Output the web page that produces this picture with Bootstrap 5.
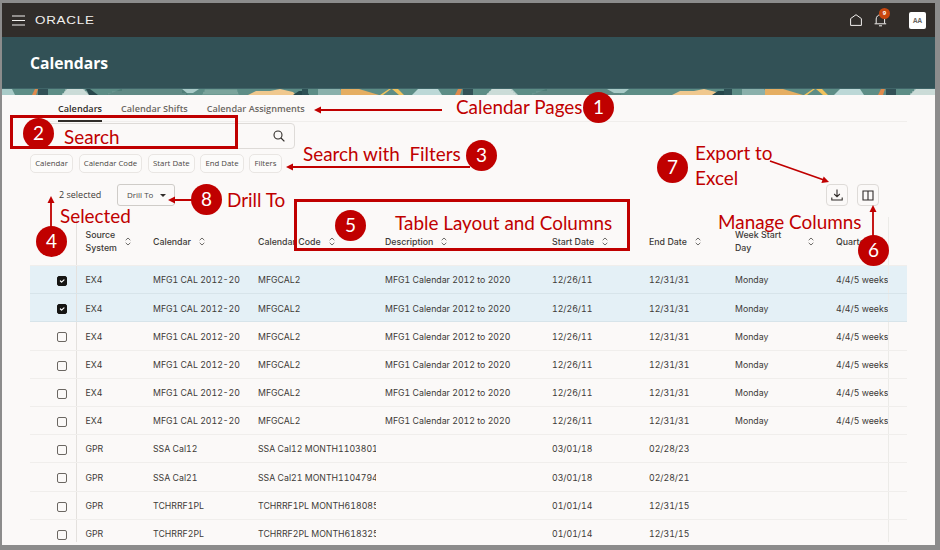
<!DOCTYPE html>
<html lang="en">
<head>
<meta charset="utf-8">
<title>Calendars</title>
<link rel="stylesheet" href="https://cdn.jsdelivr.net/npm/bootstrap@5.3.0/dist/css/bootstrap.min.css">
<style>
html,body{margin:0;height:100%;background:#fff;overflow:hidden}
body{font-family:"Open Sans","Noto Sans",sans-serif;color:#3d3a37}
.stage{position:relative;width:940px;height:550px;overflow:hidden}
.frame{width:940px;height:550px;border-style:solid;border-color:#8c8c8c;border-width:3px 5px 5px 2px;background:#fbf9f8;display:flex;flex-direction:column}
.topbar{height:34px;background:#312d2a;padding-left:10px;padding-right:9px;flex:none}
.oracle{font-family:"Liberation Sans",sans-serif;font-size:11px;line-height:1;color:#f2f0ee;letter-spacing:.6px;transform:scaleX(1.22);transform-origin:left center;margin-left:10px;width:48px}
.bellwrap{position:relative;width:13px;height:14px;margin-left:12px;margin-right:22px}
.bellwrap svg{display:block}
.bellbadge{position:absolute;left:5px;top:-5px;width:11px;height:11px;border-radius:50%;background:#c8470f;color:#fff;font-size:6px;line-height:11px;text-align:center;font-weight:700}
.avatar{width:17px;height:17px;background:#fff;border-radius:2px;color:#6a6662;font-size:6.5px;font-weight:700;line-height:17px;text-align:center}
.titlebar{height:51px;background:#325156;flex:none;padding-left:28px;color:#fff}
.titlebar h1{font-size:15.7px;font-weight:700;margin:0;padding-top:16px;line-height:20px}
.banner{display:block;height:7px;width:100%;flex:none}
.body-area{flex:1;min-height:0;padding:0 28px 0 28px;display:flex;flex-direction:column}
.tabrow{height:27px;border-bottom:1px solid #f0eeec;gap:19px;flex:none;padding-left:28px}
.tabitem{font-size:9.15px;font-weight:600;color:#6b6762;line-height:27px;height:27px;text-decoration:none;padding:0}
.tabitem.on{color:#312d2a;border-bottom:2px solid #312d2a}
.searchrow{margin-top:1px;width:265px;height:26px;border:1px solid #dedbd8;border-radius:4px;background:#fbf9f8;flex:none;padding-right:9px}
.chiprow{gap:5.5px;margin-top:5px;flex:none}
.chipitem{height:18.5px;font-size:7.8px;line-height:17px;padding:0 4.2px;color:#4a4744;background:#fcfbfa;border:1px solid #e9e6e3;border-radius:5px}
.toolrow{height:23px;margin-top:11px;flex:none;padding-left:29px;padding-right:28px}
.selcount{font-size:9px;font-weight:500;color:#3d3a37;width:58px;white-space:nowrap}
.drillbtn{width:58px;height:22px;font-size:8px;font-weight:500;color:#4a4744;border:1px solid #cfccc8;border-radius:3px;background:#fbf9f8;padding:0 0 0 9px;display:flex;align-items:center;gap:7px}
.drillbtn i{display:block;width:0;height:0;border-left:3px solid transparent;border-right:3px solid transparent;border-top:3px solid #312d2a}
.iconbtn{width:22px;height:22px;padding:0;border:1px solid #dedbd8;border-radius:4px;background:#fbf9f8;display:flex;align-items:center;justify-content:center}
.iconbtn+.iconbtn{margin-left:9px}
.tablewrap{width:877px;height:325px;overflow:hidden;margin-top:10px;flex:none}
.grid{table-layout:fixed;width:877px;margin:0;--bs-table-bg:transparent;--bs-table-color:#3d3a37;border-collapse:collapse;font-family:Inter,"Open Sans",sans-serif;font-size:8.75px;font-feature-settings:"tnum"}
.grid th,.grid td{padding:0 0 0 9px;white-space:nowrap;overflow:hidden;vertical-align:middle;border-bottom:1px solid #f0eeec;font-weight:400;line-height:12.5px}
.grid tbody td{padding-top:2px}
.grid thead th{height:49px;padding-top:2px;font-size:8.8px;font-weight:500;color:#3d3a37}
.grid tbody tr{height:28.2px}
.grid tr.sel td{background:#e4f0f6;border-bottom-color:#d7e4ea}
.grid .c0,.grid tbody td.c0{padding:0 9px 0 0;text-align:right;border-right:1px solid #e4e1de}
.grid .cq{border-right:1px solid #ecebe8}
.grid .cx,.grid tbody td.cx{padding:0}
.hcell{display:flex;align-items:center;gap:8px}
.hcell.wide{width:79px;justify-content:space-between}
.grid .form-check-input{width:10px;height:10px;margin:3px 0 0;border:1px solid #6b6762;border-radius:2px;background-color:#fbf9f8;box-shadow:none}
.grid .form-check-input:checked{background-color:#161513;border-color:#161513}
.layer{position:absolute;inset:0;pointer-events:none}
.arrows{position:absolute;left:0;top:0}
.num{position:absolute;width:31px;height:31px;background:#c00000;color:#fff;font-family:Lato,sans-serif;font-size:19px}
.note{position:absolute;color:#c00000;font-family:Lato,sans-serif;font-size:18.9px;line-height:24px;white-space:nowrap}
.redbox{position:absolute;border:3px solid #c00000}
.n1{left:583px;top:92px}.n2{left:23px;top:118px}.n3{left:466px;top:140px}.n4{left:36px;top:226px}
.n5{left:335px;top:210px}.n6{left:858px;top:235px}.n7{left:657px;top:152px}.n8{left:191px;top:184px}
.t1{left:456px;top:95px}.t2{left:64px;top:125px}.t3{left:303px;top:142px}.t4a{left:695px;top:141px}.t4b{left:695px;top:166px}
.t5{left:227px;top:188px}.t6{left:60px;top:204px}.t7{left:395px;top:211px}.t8{left:718px;top:210px}
.b1{left:10px;top:115px;width:228px;height:34px}
.b2{left:294px;top:199px;width:336px;height:52px}
</style>
</head>
<body>
<div class="stage">
  <div class="frame">
    <nav class="topbar d-flex align-items-center">
      <svg width="13" height="11" viewBox="0 0 13 11" aria-hidden="true"><path d="M0 1h13M0 5.5h13M0 10h13" stroke="#f2f0ee" stroke-width="1.2" fill="none"/></svg>
      <span class="oracle">ORACLE</span>
      <div class="ms-auto d-flex align-items-center">
        <svg width="12" height="12" viewBox="0 0 12 12" aria-hidden="true"><path d="M.6 11.4V4.6L6 .7l5.4 3.9v6.8z" stroke="#f2f0ee" stroke-width="1" fill="none"/></svg>
        <div class="bellwrap">
          <svg width="13" height="14" viewBox="0 0 13 14" aria-hidden="true"><path d="M2.2 10.5V6a4.2 4.2 0 0 1 8.4 0v4.5M.6 10.8h11.6M5 12.8h3" stroke="#f2f0ee" stroke-width="1" fill="none"/></svg>
          <span class="bellbadge">9</span>
        </div>
        <span class="avatar">AA</span>
      </div>
    </nav>
    <header class="titlebar"><h1>Calendars</h1></header>
    <svg class="banner" viewBox="0 0 933 7" preserveAspectRatio="none" aria-hidden="true">
      <rect width="933" height="7" fill="#5d8d86"/>
      <rect y="0" width="933" height="1" fill="#3f6468"/>
      <g>
        <path d="M0 1h10l3 6H0z" fill="#a9cbc8"/>
        <path d="M30 7l3-6h3l-2 6z" fill="#e08a4c"/>
        <path d="M36 1h10v6H36z" fill="#325156"/>
        <path d="M60 7l5-6h16l6 6z" fill="#b9cfcb"/>
        <path d="M63 2h20M62 4h24M60 6h28" stroke="#eef2ef" stroke-width=".7"/>
        <path d="M84 1h4l8 6h-9z" fill="#28484c"/>
        <path d="M105 7l14-6h62l5 6z" fill="#4f7d77"/>
        <path d="M110 4h70M106 6h78M120 2h60" stroke="#87aaa5" stroke-width=".6"/>
        <path d="M180 1h17l-6 4h-6z" fill="#a9cbc8"/>
        <path d="M200 7l3-6h32l2 6z" fill="#6d9a92"/>
        <path d="M203 3h32M201 5h35" stroke="#9dbdb7" stroke-width=".6"/>
        <path d="M246 7l8-4 14 0 10-2 13 3 3 3z" fill="#f0c88e"/>
        <path d="M291 7l6-4 8 0 2 4z" fill="#25474b"/>
        <path d="M300 1h6v6h-6z" fill="#2e5155"/>
      </g>
      <g>
        <path d="M316 1h22l4 6h-26z" fill="#8ab0ab"/>
        <path d="M339 1h18l20 6h-38z" fill="#e5ae62"/>
        <path d="M378 7l9-6h2l-8 6zM390 1h6l6 6h-5z" fill="#f0c25d"/>
        <path d="M410 7l6-6h20l4 6z" fill="#bcd8d7"/>
        <path d="M453 7l3-6h4l-2 6z" fill="#e08a4c"/>
        <path d="M461 1h10v6h-10z" fill="#325156"/>
        <path d="M484 7l6-6h20l6 6z" fill="#b9cfcb"/>
        <path d="M489 2h20M487 4h24M485 6h28" stroke="#eef2ef" stroke-width=".7"/>
        <path d="M530 7l14-6h70l5 6z" fill="#4f7d77"/>
        <path d="M534 4h80M530 6h88M545 2h68" stroke="#87aaa5" stroke-width=".6"/>
        <path d="M605 1h22l-5 4h-10z" fill="#a9cbc8"/>
        <path d="M670 7l8-4 14 0 10-2 12 3 3 3z" fill="#f0c88e"/>
        <path d="M710 7l6-4 6 0 2 4z" fill="#25474b"/>
        <path d="M722 1h8v6h-8z" fill="#2e5155"/>
      </g>
      <g>
        <path d="M740 1h22l4 6h-26z" fill="#8ab0ab"/>
        <path d="M763 1h18l20 6h-38z" fill="#e5ae62"/>
        <path d="M802 7l9-6h2l-8 6zM814 1h6l6 6h-5z" fill="#f0c25d"/>
        <path d="M832 7l6-6h20l4 6z" fill="#bcd8d7"/>
        <path d="M876 7l3-6h4l-2 6z" fill="#e08a4c"/>
        <path d="M884 1h10v6h-10z" fill="#325156"/>
        <path d="M908 7l6-6h19v6z" fill="#b9cfcb"/>
        <path d="M912 2h21M910 4h23M908 6h25" stroke="#eef2ef" stroke-width=".7"/>
      </g>
    </svg>
    <main class="body-area">
      <div class="tabrow d-flex align-items-start">
        <a class="tabitem on" href="#">Calendars</a>
        <a class="tabitem" href="#">Calendar Shifts</a>
        <a class="tabitem" href="#">Calendar Assignments</a>
      </div>
      <div class="searchrow d-flex align-items-center justify-content-end">
        <svg width="12" height="12" viewBox="0 0 12 12" aria-hidden="true"><circle cx="5" cy="5" r="4" stroke="#312d2a" stroke-width="1.1" fill="none"/><path d="M8 8l3.4 3.4" stroke="#312d2a" stroke-width="1.2"/></svg>
      </div>
      <div class="chiprow d-flex">
        <span class="chipitem">Calendar</span>
        <span class="chipitem">Calendar Code</span>
        <span class="chipitem">Start Date</span>
        <span class="chipitem">End Date</span>
        <span class="chipitem">Filters</span>
      </div>
      <div class="toolrow d-flex align-items-center">
        <span class="selcount">2 selected</span>
        <button class="drillbtn" type="button">Drill To <i></i></button>
        <button class="iconbtn ms-auto" type="button" aria-label="Export to Excel"><svg width="12" height="12" viewBox="0 0 12 12" aria-hidden="true"><path d="M6 .5v7M3.2 5L6 7.8 8.8 5M.8 8.5v2.5h10.4V8.5" stroke="#312d2a" stroke-width="1.1" fill="none"/></svg></button>
        <button class="iconbtn" type="button" aria-label="Manage Columns"><svg width="12" height="11" viewBox="0 0 12 11" aria-hidden="true"><path d="M1 1h10v9H1zM6 1v9" stroke="#312d2a" stroke-width="1.1" fill="none"/></svg></button>
      </div>
      <div class="tablewrap">
        <table class="table grid">
          <colgroup><col style="width:46px"><col style="width:68px"><col style="width:105px"><col style="width:127px"><col style="width:167px"><col style="width:97px"><col style="width:86px"><col style="width:101px"><col style="width:61px"><col style="width:19px"></colgroup>
          <thead>
            <tr>
              <th class="c0"></th>
              <th><div class="hcell"><span>Source<br>System</span><svg width="6" height="9" viewBox="0 0 6 9"><path d="M.7 3.2L3 1l2.3 2.2M.7 5.8L3 8l2.3-2.2" stroke="#4a4744" stroke-width=".8" fill="none"/></svg></div></th>
              <th><div class="hcell"><span>Calendar</span><svg width="6" height="9" viewBox="0 0 6 9"><path d="M.7 3.2L3 1l2.3 2.2M.7 5.8L3 8l2.3-2.2" stroke="#4a4744" stroke-width=".8" fill="none"/></svg></div></th>
              <th><div class="hcell"><span>Calendar Code</span><svg width="6" height="9" viewBox="0 0 6 9"><path d="M.7 3.2L3 1l2.3 2.2M.7 5.8L3 8l2.3-2.2" stroke="#4a4744" stroke-width=".8" fill="none"/></svg></div></th>
              <th><div class="hcell"><span>Description</span><svg width="6" height="9" viewBox="0 0 6 9"><path d="M.7 3.2L3 1l2.3 2.2M.7 5.8L3 8l2.3-2.2" stroke="#4a4744" stroke-width=".8" fill="none"/></svg></div></th>
              <th><div class="hcell"><span>Start Date</span><svg width="6" height="9" viewBox="0 0 6 9"><path d="M.7 3.2L3 1l2.3 2.2M.7 5.8L3 8l2.3-2.2" stroke="#4a4744" stroke-width=".8" fill="none"/></svg></div></th>
              <th><div class="hcell"><span>End Date</span><svg width="6" height="9" viewBox="0 0 6 9"><path d="M.7 3.2L3 1l2.3 2.2M.7 5.8L3 8l2.3-2.2" stroke="#4a4744" stroke-width=".8" fill="none"/></svg></div></th>
              <th><div class="hcell wide"><span>Week Start<br>Day</span><svg width="6" height="9" viewBox="0 0 6 9"><path d="M.7 3.2L3 1l2.3 2.2M.7 5.8L3 8l2.3-2.2" stroke="#4a4744" stroke-width=".8" fill="none"/></svg></div></th>
              <th class="cq"><span>Quarter</span></th>
              <th class="cx"></th>
            </tr>
          </thead>
          <tbody>
            <tr class="sel"><td class="c0"><input class="form-check-input" type="checkbox" checked aria-label="Select row"></td><td>EX4</td><td>MFG1 CAL 2012-20</td><td>MFGCAL2</td><td>MFG1 Calendar 2012 to 2020</td><td>12/26/11</td><td>12/31/31</td><td>Monday</td><td class="cq">4/4/5 weeks</td><td class="cx"></td></tr>
            <tr class="sel"><td class="c0"><input class="form-check-input" type="checkbox" checked aria-label="Select row"></td><td>EX4</td><td>MFG1 CAL 2012-20</td><td>MFGCAL2</td><td>MFG1 Calendar 2012 to 2020</td><td>12/26/11</td><td>12/31/31</td><td>Monday</td><td class="cq">4/4/5 weeks</td><td class="cx"></td></tr>
            <tr><td class="c0"><input class="form-check-input" type="checkbox" aria-label="Select row"></td><td>EX4</td><td>MFG1 CAL 2012-20</td><td>MFGCAL2</td><td>MFG1 Calendar 2012 to 2020</td><td>12/26/11</td><td>12/31/31</td><td>Monday</td><td class="cq">4/4/5 weeks</td><td class="cx"></td></tr>
            <tr><td class="c0"><input class="form-check-input" type="checkbox" aria-label="Select row"></td><td>EX4</td><td>MFG1 CAL 2012-20</td><td>MFGCAL2</td><td>MFG1 Calendar 2012 to 2020</td><td>12/26/11</td><td>12/31/31</td><td>Monday</td><td class="cq">4/4/5 weeks</td><td class="cx"></td></tr>
            <tr><td class="c0"><input class="form-check-input" type="checkbox" aria-label="Select row"></td><td>EX4</td><td>MFG1 CAL 2012-20</td><td>MFGCAL2</td><td>MFG1 Calendar 2012 to 2020</td><td>12/26/11</td><td>12/31/31</td><td>Monday</td><td class="cq">4/4/5 weeks</td><td class="cx"></td></tr>
            <tr><td class="c0"><input class="form-check-input" type="checkbox" aria-label="Select row"></td><td>EX4</td><td>MFG1 CAL 2012-20</td><td>MFGCAL2</td><td>MFG1 Calendar 2012 to 2020</td><td>12/26/11</td><td>12/31/31</td><td>Monday</td><td class="cq">4/4/5 weeks</td><td class="cx"></td></tr>
            <tr><td class="c0"><input class="form-check-input" type="checkbox" aria-label="Select row"></td><td>GPR</td><td>SSA Cal12</td><td>SSA Cal12 MONTH1103801</td><td></td><td>03/01/18</td><td>02/28/23</td><td></td><td class="cq"></td><td class="cx"></td></tr>
            <tr><td class="c0"><input class="form-check-input" type="checkbox" aria-label="Select row"></td><td>GPR</td><td>SSA Cal21</td><td>SSA Cal21 MONTH1104794</td><td></td><td>03/01/18</td><td>02/28/21</td><td></td><td class="cq"></td><td class="cx"></td></tr>
            <tr><td class="c0"><input class="form-check-input" type="checkbox" aria-label="Select row"></td><td>GPR</td><td>TCHRRF1PL</td><td>TCHRRF1PL MONTH618085</td><td></td><td>01/01/14</td><td>12/31/15</td><td></td><td class="cq"></td><td class="cx"></td></tr>
            <tr><td class="c0"><input class="form-check-input" type="checkbox" aria-label="Select row"></td><td>GPR</td><td>TCHRRF2PL</td><td>TCHRRF2PL MONTH618325</td><td></td><td>01/01/14</td><td>12/31/15</td><td></td><td class="cq"></td><td class="cx"></td></tr>
          </tbody>
        </table>
      </div>
    </main>
  </div>

  <div class="layer">
    <div class="redbox b1"></div>
    <div class="redbox b2"></div>
    <svg class="arrows" width="940" height="550" viewBox="0 0 940 550" aria-hidden="true">
      <g stroke="#c00000" stroke-width="1.8" fill="none">
        <path d="M442 110H318M470 167H290M192 200h-20M51 228v-28M873 236v-28M770 161l54 19"/>
      </g>
      <g fill="#c00000">
        <path d="M314 110l7-3.5v7z"/>
        <path d="M286 167l7-3.5v7z"/>
        <path d="M168 200l7-3.5v7z"/>
        <path d="M51 196l3.5 7h-7z"/>
        <path d="M873 205l3.5 7h-7z"/>
        <path d="M829 182l-7.6 1.1 2.3-6.7z"/>
      </g>
    </svg>
    <span class="num rounded-circle d-flex align-items-center justify-content-center n1">1</span>
    <span class="num rounded-circle d-flex align-items-center justify-content-center n2">2</span>
    <span class="num rounded-circle d-flex align-items-center justify-content-center n3">3</span>
    <span class="num rounded-circle d-flex align-items-center justify-content-center n4">4</span>
    <span class="num rounded-circle d-flex align-items-center justify-content-center n5">5</span>
    <span class="num rounded-circle d-flex align-items-center justify-content-center n6">6</span>
    <span class="num rounded-circle d-flex align-items-center justify-content-center n7">7</span>
    <span class="num rounded-circle d-flex align-items-center justify-content-center n8">8</span>
    <span class="note t1">Calendar Pages</span>
    <span class="note t2">Search</span>
    <span class="note t3">Search with&nbsp; Filters</span>
    <span class="note t4a">Export to</span>
    <span class="note t4b">Excel</span>
    <span class="note t5">Drill To</span>
    <span class="note t6">Selected</span>
    <span class="note t7">Table Layout and Columns</span>
    <span class="note t8">Manage Columns</span>
  </div>
</div>
<script src="https://cdn.jsdelivr.net/npm/bootstrap@5.3.0/dist/js/bootstrap.bundle.min.js"></script>
</body>
</html>
